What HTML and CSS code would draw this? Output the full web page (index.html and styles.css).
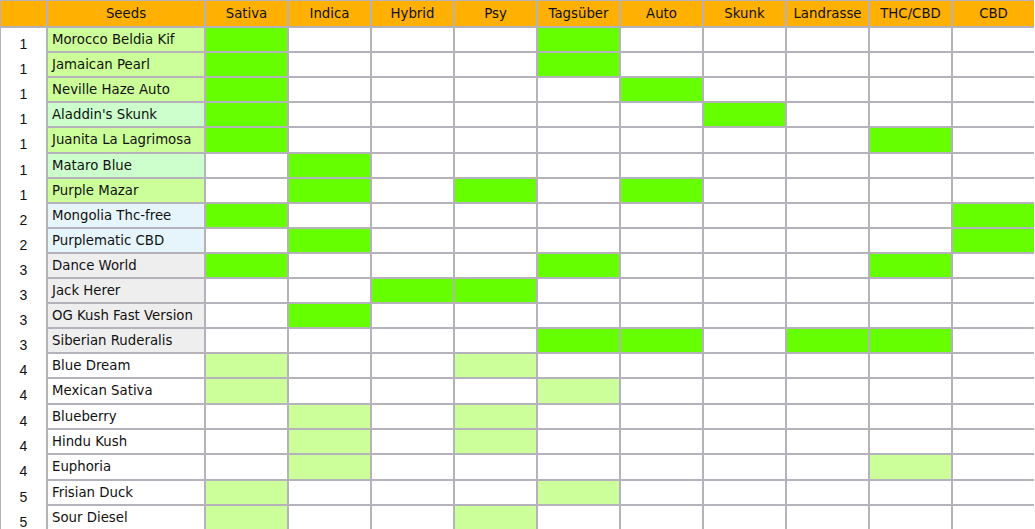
FILE: index.html
```html
<!DOCTYPE html>
<html>
<head>
<meta charset="utf-8">
<link rel="stylesheet" href="styles.css">
</head>
<body>
<div class="sheet">
  <div class="h"></div>
  <div class="h">Seeds</div>
  <div class="h">Sativa</div>
  <div class="h">Indica</div>
  <div class="h">Hybrid</div>
  <div class="h">Psy</div>
  <div class="h">Tagsüber</div>
  <div class="h">Auto</div>
  <div class="h">Skunk</div>
  <div class="h">Landrasse</div>
  <div class="h">THC/CBD</div>
  <div class="h">CBD</div>

  <div class="nums">
    <div class="n">1</div><div class="n">1</div><div class="n">1</div><div class="n">1</div><div class="n">1</div>
    <div class="n">1</div><div class="n">1</div><div class="n">2</div><div class="n">2</div><div class="n">3</div>
    <div class="n">3</div><div class="n">3</div><div class="n">3</div><div class="n">4</div><div class="n">4</div>
    <div class="n">4</div><div class="n">4</div><div class="n">4</div><div class="n">5</div><div class="n">5</div>
  </div>

  <div class="name lg">Morocco Beldia Kif</div>
  <div class="g"></div><div class="c"></div><div class="c"></div><div class="c"></div><div class="g"></div><div class="c"></div><div class="c"></div><div class="c"></div><div class="c"></div><div class="c"></div>

  <div class="name lg">Jamaican Pearl</div>
  <div class="g"></div><div class="c"></div><div class="c"></div><div class="c"></div><div class="g"></div><div class="c"></div><div class="c"></div><div class="c"></div><div class="c"></div><div class="c"></div>

  <div class="name lg">Neville Haze Auto</div>
  <div class="g"></div><div class="c"></div><div class="c"></div><div class="c"></div><div class="c"></div><div class="g"></div><div class="c"></div><div class="c"></div><div class="c"></div><div class="c"></div>

  <div class="name mint">Aladdin's Skunk</div>
  <div class="g"></div><div class="c"></div><div class="c"></div><div class="c"></div><div class="c"></div><div class="c"></div><div class="g"></div><div class="c"></div><div class="c"></div><div class="c"></div>

  <div class="name lg">Juanita La Lagrimosa</div>
  <div class="g"></div><div class="c"></div><div class="c"></div><div class="c"></div><div class="c"></div><div class="c"></div><div class="c"></div><div class="c"></div><div class="g"></div><div class="c"></div>

  <div class="name mint">Mataro Blue</div>
  <div class="c"></div><div class="g"></div><div class="c"></div><div class="c"></div><div class="c"></div><div class="c"></div><div class="c"></div><div class="c"></div><div class="c"></div><div class="c"></div>

  <div class="name lg">Purple Mazar</div>
  <div class="c"></div><div class="g"></div><div class="c"></div><div class="g"></div><div class="c"></div><div class="g"></div><div class="c"></div><div class="c"></div><div class="c"></div><div class="c"></div>

  <div class="name blue">Mongolia Thc-free</div>
  <div class="g"></div><div class="c"></div><div class="c"></div><div class="c"></div><div class="c"></div><div class="c"></div><div class="c"></div><div class="c"></div><div class="c"></div><div class="g"></div>

  <div class="name blue">Purplematic CBD</div>
  <div class="c"></div><div class="g"></div><div class="c"></div><div class="c"></div><div class="c"></div><div class="c"></div><div class="c"></div><div class="c"></div><div class="c"></div><div class="g"></div>

  <div class="name gray">Dance World</div>
  <div class="g"></div><div class="c"></div><div class="c"></div><div class="c"></div><div class="g"></div><div class="c"></div><div class="c"></div><div class="c"></div><div class="g"></div><div class="c"></div>

  <div class="name gray">Jack Herer</div>
  <div class="c"></div><div class="c"></div><div class="g"></div><div class="g"></div><div class="c"></div><div class="c"></div><div class="c"></div><div class="c"></div><div class="c"></div><div class="c"></div>

  <div class="name gray">OG Kush Fast Version</div>
  <div class="c"></div><div class="g"></div><div class="c"></div><div class="c"></div><div class="c"></div><div class="c"></div><div class="c"></div><div class="c"></div><div class="c"></div><div class="c"></div>

  <div class="name gray">Siberian Ruderalis</div>
  <div class="c"></div><div class="c"></div><div class="c"></div><div class="c"></div><div class="g"></div><div class="g"></div><div class="c"></div><div class="g"></div><div class="g"></div><div class="c"></div>

  <div class="name">Blue Dream</div>
  <div class="l"></div><div class="c"></div><div class="c"></div><div class="l"></div><div class="c"></div><div class="c"></div><div class="c"></div><div class="c"></div><div class="c"></div><div class="c"></div>

  <div class="name">Mexican Sativa</div>
  <div class="l"></div><div class="c"></div><div class="c"></div><div class="c"></div><div class="l"></div><div class="c"></div><div class="c"></div><div class="c"></div><div class="c"></div><div class="c"></div>

  <div class="name">Blueberry</div>
  <div class="c"></div><div class="l"></div><div class="c"></div><div class="l"></div><div class="c"></div><div class="c"></div><div class="c"></div><div class="c"></div><div class="c"></div><div class="c"></div>

  <div class="name">Hindu Kush</div>
  <div class="c"></div><div class="l"></div><div class="c"></div><div class="l"></div><div class="c"></div><div class="c"></div><div class="c"></div><div class="c"></div><div class="c"></div><div class="c"></div>

  <div class="name">Euphoria</div>
  <div class="c"></div><div class="l"></div><div class="c"></div><div class="c"></div><div class="c"></div><div class="c"></div><div class="c"></div><div class="c"></div><div class="l"></div><div class="c"></div>

  <div class="name">Frisian Duck</div>
  <div class="l"></div><div class="c"></div><div class="c"></div><div class="c"></div><div class="l"></div><div class="c"></div><div class="c"></div><div class="c"></div><div class="c"></div><div class="c"></div>

  <div class="name">Sour Diesel</div>
  <div class="l"></div><div class="c"></div><div class="c"></div><div class="l"></div><div class="c"></div><div class="c"></div><div class="c"></div><div class="c"></div><div class="c"></div><div class="c"></div>
</div>
</body>
</html>
```

FILE: styles.css
```css
html, body {
  margin: 0;
  padding: 0;
  background: #ffffff;
  overflow: hidden;
}

.sheet {
  --rows: 23px 23px 23px 23px 24px 23px 23px 23px 23px 23px 23px 23px 23px 23px 24px 23px 23px 24px 23px 23px;
  display: grid;
  grid-template-columns: 45px 156px repeat(10, 81px);
  grid-template-rows: 25px var(--rows);
  gap: 2px;
  padding: 1px 0 0 1px;
  background: #b6b2bb;
  width: max-content;
  font-family: "DejaVu Sans", Verdana, sans-serif;
  font-size: 13.3px;
  color: #111111;
}

.h {
  background: #ffb000;
  text-align: center;
  line-height: 25px;
}

.nums {
  grid-column: 1;
  grid-row: 2 / span 20;
  background: #ffffff;
  display: grid;
  grid-template-rows: var(--rows);
  row-gap: 2px;
  font-family: "Liberation Sans", Arial, sans-serif;
  font-size: 14px;
}

.n {
  box-sizing: border-box;
  padding-top: 9px;
  line-height: 14px;
  text-align: center;
}

.name {
  background: #ffffff;
  padding-left: 4px;
  line-height: 23px;
  white-space: nowrap;
}

.lg { background: #ccff99; }
.mint { background: #ccffcc; }
.blue { background: #e6f5fc; }
.gray { background: #eeeeee; }

.c { background: #ffffff; }
.g { background: #66ff00; }
.l { background: #ccff99; }
```
